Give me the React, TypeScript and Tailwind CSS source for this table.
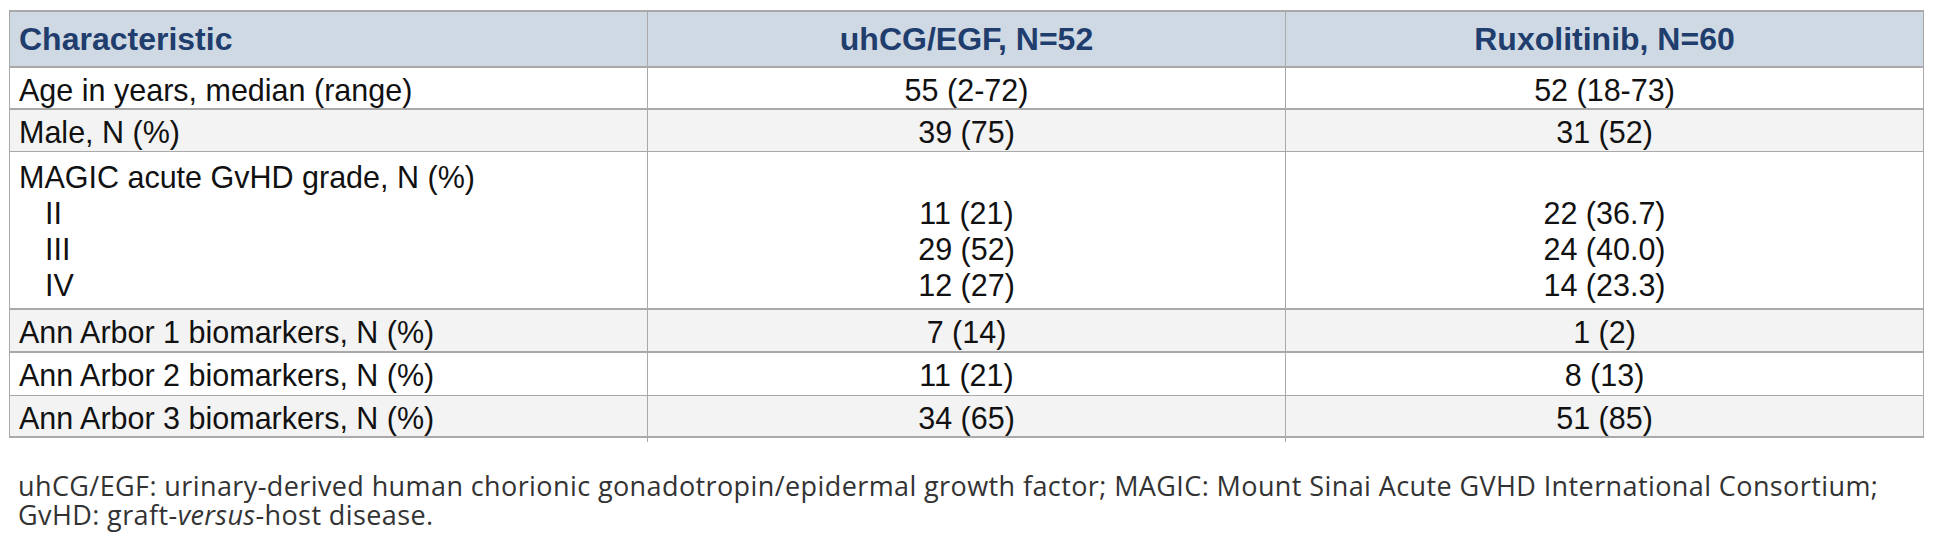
import React from "react";

const body = "font-['Liberation_Sans',Arial,sans-serif]";

function Cell({ children, center, last }: { children?: React.ReactNode; center?: boolean; last?: boolean }) {
  return (
    <div
      className={`flex items-center ${center ? "justify-center" : "pl-[9px]"} ${last ? "" : "border-r border-[#a9a9a9]"}`}
    >
      {children}
    </div>
  );
}

type Row = { label: string; a: string; b: string; h: string; bb: string; bg: string };

const rowsTop: Row[] = [
  { label: "Age in years, median (range)", a: "55 (2-72)", b: "52 (18-73)", h: "h-[42px]", bb: "border-b-2", bg: "bg-white" },
  { label: "Male, N (%)", a: "39 (75)", b: "31 (52)", h: "h-[42px]", bb: "border-b", bg: "bg-[#f3f3f3]" },
];

const rowsBottom: Row[] = [
  { label: "Ann Arbor 1 biomarkers, N (%)", a: "7 (14)", b: "1 (2)", h: "h-[43px]", bb: "border-b-2", bg: "bg-[#f3f3f3]" },
  { label: "Ann Arbor 2 biomarkers, N (%)", a: "11 (21)", b: "8 (13)", h: "h-[43px]", bb: "border-b", bg: "bg-white" },
  { label: "Ann Arbor 3 biomarkers, N (%)", a: "34 (65)", b: "51 (85)", h: "h-[42px]", bb: "border-b-2", bg: "bg-[#f3f3f3]" },
];

function DataRow({ r }: { r: Row }) {
  return (
    <div className={`grid grid-cols-[638px_638px_1fr] ${r.h} ${r.bb} border-[#a9a9a9] ${r.bg}`}>
      <Cell>{r.label}</Cell>
      <Cell center>{r.a}</Cell>
      <Cell center last>{r.b}</Cell>
    </div>
  );
}

export default function App() {
  const magic = [
    ["MAGIC acute GvHD grade, N (%)", "", ""],
    ["II", "11 (21)", "22 (36.7)"],
    ["III", "29 (52)", "24 (40.0)"],
    ["IV", "12 (27)", "14 (23.3)"],
  ];
  return (
    <div className="bg-white w-[1938px] h-[543px] pt-[10px] pl-[9px]">
      <div className={`w-[1915px] border-t-2 border-l border-r border-[#a9a9a9] text-[30.5px] text-[#111] ${body}`}>
        <div className="grid grid-cols-[638px_638px_1fr] h-[56px] border-b-2 border-[#a9a9a9] bg-[#cfd9e3] text-[#1f3d6d] font-bold text-[32px]">
          <Cell>Characteristic</Cell>
          <Cell center>uhCG/EGF, N=52</Cell>
          <Cell center last>Ruxolitinib, N=60</Cell>
        </div>
        {rowsTop.map((r) => (
          <DataRow key={r.label} r={r} />
        ))}
        <div className="grid grid-cols-[638px_638px_1fr] h-[158px] border-b-2 border-[#a9a9a9] bg-white">
          {[0, 1, 2].map((c) => (
            <div
              key={c}
              className={`flex flex-col pt-[7px] ${c === 0 ? "pl-[9px]" : "items-center"} ${c < 2 ? "border-r border-[#a9a9a9]" : ""}`}
            >
              {magic.map((m, i) => (
                <div key={i} className={`h-[36px] leading-[36px] ${c === 0 && i > 0 ? "pl-[26px]" : ""}`}>
                  {m[c]}
                </div>
              ))}
            </div>
          ))}
        </div>
        {rowsBottom.map((r) => (
          <DataRow key={r.label} r={r} />
        ))}
      </div>
      <div className="mt-[33px] pl-[9px] text-[27px] leading-[29px] tracking-[0.4px] text-[#333] font-['Open_Sans',sans-serif]">
        <p>
          uhCG/EGF: urinary-derived human chorionic gonadotropin/epidermal growth factor; MAGIC: Mount Sinai Acute GVHD International Consortium;
        </p>
        <p>
          GvHD: graft-<i>versus</i>-host disease.
        </p>
      </div>
    </div>
  );
}
